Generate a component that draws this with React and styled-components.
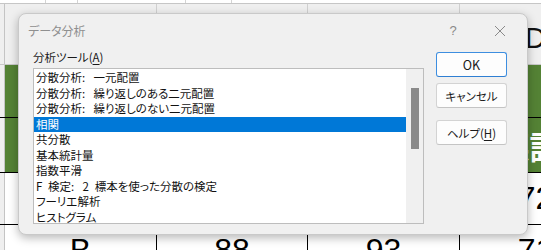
import React from "react";
import styled, { createGlobalStyle } from "styled-components";

const GlobalStyle = createGlobalStyle`
  html, body { margin: 0; padding: 0; background: #fff; overflow: hidden; }
  body { font-family: "Noto Sans CJK JP", "Noto Sans", sans-serif; }
`;

const Sheet = styled.div`
  position: relative;
  width: 541px;
  height: 250px;
  overflow: hidden;
  background: #fff;
`;

const TopStrip = styled.div`
  display: grid;
  grid-template-columns: 46px 32px 108px 46px 400px;
  height: 3px;
  border-bottom: 1px solid #c6c6c6;
`;

const TopCell = styled.div`
  border-right: 1px solid #d4d4d4;
  background: #fff;
`;

const Row = styled.div`
  display: grid;
  grid-template-columns: 5px 152px 151px 152px 152px;
  height: ${(p) => p.$h}px;
  box-sizing: border-box;
  border-bottom: 1px solid ${(p) => (p.$header ? "#c8c8c8" : "#000")};
`;

const RowHead = styled.div`
  background: #efefef;
  border-right: 1px solid #c4c4c4;
`;

const ColHead = styled.div`
  background: #efefef;
  border-right: 1px solid #d0d0d0;
  display: flex;
  align-items: center;
  justify-content: center;
  padding-top: 8px;
  box-sizing: border-box;
  font-family: "Liberation Sans", Arial, sans-serif;
  font-size: 29px;
  color: #111;
`;

const Cell = styled.div`
  background: ${(p) => (p.$green ? "#548235" : "#fff")};
  border-right: 1px solid #000;
  display: flex;
  align-items: center;
  justify-content: center;
  padding-right: ${(p) => p.$pr || 0}px;
  font-family: ${(p) =>
    p.$jp ? '"Noto Sans CJK JP", sans-serif' : '"Liberation Sans", Arial, sans-serif'};
  font-size: 32px;
  font-weight: ${(p) => (p.$jp ? 700 : 400)};
  color: ${(p) => (p.$green ? "#fff" : "#000")};
  white-space: nowrap;
  overflow: hidden;
`;

const Dialog = styled.div`
  position: absolute;
  left: 18px;
  top: 13px;
  width: 510px;
  height: 222px;
  box-sizing: border-box;
  background: #f0f0f0;
  border: 1px solid #c9c9c9;
  border-radius: 8px;
  box-shadow: 0 3px 10px rgba(0, 0, 0, 0.28);
  display: flex;
  flex-direction: column;
  color: #1a1a1a;
  font-size: 11.5px;
  font-feature-settings: "palt";
`;

const TitleBar = styled.div`
  height: 33px;
  display: flex;
  align-items: center;
  padding: 0 14px 0 9px;
  box-sizing: border-box;
`;

const Title = styled.div`
  flex: 1;
  color: #8f8f8f;
  font-size: 12px;
`;

const TitleIcon = styled.span`
  color: #8a8a8a;
  font-family: "Liberation Sans", Arial, sans-serif;
  font-size: 13px;
  width: ${(p) => p.$w}px;
  margin-left: ${(p) => p.$ml || 0}px;
  display: inline-flex;
  justify-content: center;
`;

const Body = styled.div`
  display: flex;
  padding-left: 14px;
  gap: 12px;
`;

const LeftCol = styled.div`
  display: flex;
  flex-direction: column;
  width: 391px;
`;

const Label = styled.div`
  height: 18px;
  line-height: 18px;
  margin-top: 1px;
  margin-bottom: 2px;
  font-size: 11.5px;
`;

const U = styled.span`
  text-decoration: underline;
  text-underline-offset: 2px;
`;

const ListBox = styled.div`
  width: 391px;
  height: 156px;
  box-sizing: border-box;
  border: 1px solid #bdbdbd;
  background: #fff;
  display: flex;
`;

const Items = styled.div`
  flex: 1;
  padding-top: 1px;
  display: flex;
  flex-direction: column;
`;

const Item = styled.div`
  height: 15.5px;
  line-height: 15.5px;
  flex: none;
  padding-left: 2px;
  font-size: 11.5px;
  white-space: pre;
  background: ${(p) => (p.$sel ? "#0078d7" : "transparent")};
  color: ${(p) => (p.$sel ? "#fff" : "#111")};
`;

const ScrollTrack = styled.div`
  width: 17px;
  background: #f0f0f0;
  display: flex;
  justify-content: center;
  padding-top: 19px;
  box-sizing: border-box;
`;

const Thumb = styled.div`
  width: 8px;
  height: 61px;
  background: #8a8a8a;
`;

const Buttons = styled.div`
  display: flex;
  flex-direction: column;
  padding-top: 5px;
`;

const Button = styled.div`
  width: 71px;
  height: 25px;
  box-sizing: border-box;
  margin-top: ${(p) => p.$mt || 0}px;
  border: 1px solid ${(p) => (p.$primary ? "#3d8ee0" : "#d3d3d3")};
  border-bottom-color: ${(p) => (p.$primary ? "#2f7fd3" : "#c4c4c4")};
  border-radius: 3px;
  background: #fdfdfd;
  display: flex;
  align-items: center;
  justify-content: center;
  font-size: ${(p) => (p.$primary ? 12.5 : 11.5)}px;
  color: #1a1a1a;
`;

const items = [
  "分散分析: \u2002一元配置",
  "分散分析: \u2002繰り返しのある二元配置",
  "分散分析: \u2002繰り返しのない二元配置",
  "相関",
  "共分散",
  "基本統計量",
  "指数平滑",
  "F\u2002検定: \u20022\u2002標本を使った分散の検定",
  "フーリエ解析",
  "ヒストグラム",
];

export default function App() {
  return (
    <>
      <GlobalStyle />
      <Sheet>
        <TopStrip>
          <TopCell />
          <TopCell />
          <TopCell />
          <TopCell />
          <TopCell />
        </TopStrip>
        <Row $h={61} $header>
          <RowHead />
          <ColHead>A</ColHead>
          <ColHead>B</ColHead>
          <ColHead>C</ColHead>
          <ColHead>D</ColHead>
        </Row>
        <Row $h={53}>
          <RowHead />
          <Cell $green />
          <Cell $green />
          <Cell $green />
          <Cell $green />
        </Row>
        <Row $h={55}>
          <RowHead />
          <Cell $green $jp>国語</Cell>
          <Cell $green $jp>数学</Cell>
          <Cell $green $jp>理科</Cell>
          <Cell $green $jp $pr={12}>英語</Cell>
        </Row>
        <Row $h={52}>
          <RowHead />
          <Cell>A</Cell>
          <Cell>75</Cell>
          <Cell>80</Cell>
          <Cell>72</Cell>
        </Row>
        <Row $h={52}>
          <RowHead />
          <Cell>B</Cell>
          <Cell>88</Cell>
          <Cell>93</Cell>
          <Cell>71</Cell>
        </Row>

        <Dialog>
          <TitleBar>
            <Title>データ分析</Title>
            <TitleIcon $w={20}>?</TitleIcon>
            <TitleIcon $w={26} $ml={24}>
              <svg width="12" height="12" viewBox="0 0 12 12">
                <path d="M1 1 L11 11 M11 1 L1 11" stroke="#8a8a8a" strokeWidth="1" fill="none" />
              </svg>
            </TitleIcon>
          </TitleBar>
          <Body>
            <LeftCol>
              <Label>
                分析ツール(<U>A</U>)
              </Label>
              <ListBox>
                <Items>
                  {items.map((t, i) => (
                    <Item key={t} $sel={i === 3}>
                      {t}
                    </Item>
                  ))}
                </Items>
                <ScrollTrack>
                  <Thumb />
                </ScrollTrack>
              </ListBox>
            </LeftCol>
            <Buttons>
              <Button $primary>OK</Button>
              <Button $mt={6}>キャンセル</Button>
              <Button $mt={12}>
                ヘルプ(<U>H</U>)
              </Button>
            </Buttons>
          </Body>
        </Dialog>
      </Sheet>
    </>
  );
}
